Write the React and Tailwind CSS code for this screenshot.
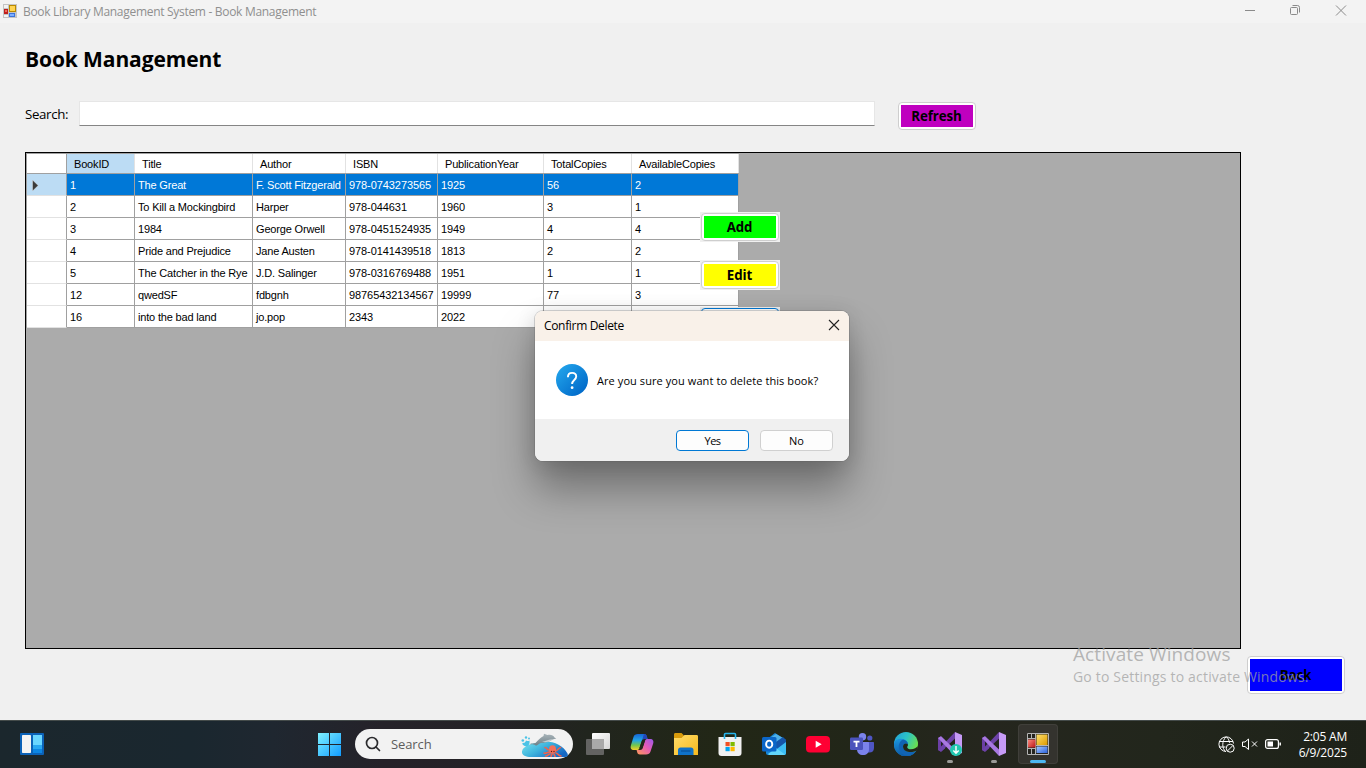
import React from "react";

const columns = ["BookID", "Title", "Author", "ISBN", "PublicationYear", "TotalCopies", "AvailableCopies"];
const books = [
  ["1", "The Great", "F. Scott Fitzgerald", "978-0743273565", "1925", "56", "2"],
  ["2", "To Kill a Mockingbird", "Harper", "978-044631", "1960", "3", "1"],
  ["3", "1984", "George Orwell", "978-0451524935", "1949", "4", "4"],
  ["4", "Pride and Prejudice", "Jane Austen", "978-0141439518", "1813", "2", "2"],
  ["5", "The Catcher in the Rye", "J.D. Salinger", "978-0316769488", "1951", "1", "1"],
  ["12", "qwedSF", "fdbgnh", "98765432134567", "19999", "77", "3"],
  ["16", "into the bad land", "jo.pop", "2343", "2022", "", ""],
];

const rowGrid = "grid grid-cols-[40px_68px_118px_93px_92px_106px_88px_107px]";

function FormsIcon({ className }) {
  return (
    <svg className={className} viewBox="0 0 14 14" shapeRendering="crispEdges">
      <rect width="14" height="14" fill="#c4c4c4" />
      <rect x="1" y="1" width="4" height="3" fill="#f3f3f3" />
      <rect x="1" y="11" width="4" height="2" fill="#f3f3f3" />
      <rect x="1" y="5" width="4" height="5" fill="#c0201c" />
      <rect x="2" y="6" width="2" height="2" fill="#f06a5c" />
      <rect x="6" y="1" width="7" height="7" fill="#b98900" />
      <rect x="7" y="2" width="5" height="5" fill="#ffd451" />
      <rect x="6" y="9" width="6" height="4" fill="#3a73dc" />
      <rect x="7" y="10" width="4" height="2" fill="#7fb0ff" />
    </svg>
  );
}

function TitleBar() {
  return (
    <div className="flex h-[23px] shrink-0 items-start bg-[#f3f3f3] pl-[3px]">
      <FormsIcon className="mt-1 h-[14px] w-[14px]" />
      <span className="ml-[6px] mt-[3px] text-[12px] leading-[18px] tracking-[-0.3px] text-[#8f8f8f]">
        Book Library Management System - Book Management
      </span>
      <div className="ml-auto mr-[19px] mt-[4px] flex gap-[34px] text-[#8a8a8a]">
        <svg className="h-3 w-3" viewBox="0 0 12 12" fill="none" stroke="currentColor"><path d="M2 6.500h10" /></svg>
        <svg className="h-3 w-3" viewBox="0 0 12 12" fill="none" stroke="currentColor">
          <rect x="1.500" y="3.500" width="7" height="7" rx="1" />
          <path d="M3.500 1.500h5a2 2 0 0 1 2 2v5" />
        </svg>
        <svg className="h-3 w-3" viewBox="0 0 12 12" fill="none" stroke="currentColor"><path d="M1 1.500l10 10M11 1.500l-10 10" /></svg>
      </div>
    </div>
  );
}

function DataGrid() {
  return (
    <div className="relative ml-[25px] mt-[21px] h-[497px] w-[1216px] border border-black bg-[#ababab]">
      <div className="w-[713px] border-l border-t border-[#a0a0a0] font-['Liberation_Sans',sans-serif] text-[11px] tracking-[-0.17px] text-black">
        <div className={`${rowGrid} h-[20px] border-b border-[#a0a0a0] bg-white leading-[18px]`}>
          <div className="border-r border-[#a0a0a0]" />
          {columns.map((c, i) => (
            <div key={c} className={`whitespace-nowrap border-r border-[#e2e2e2] pl-[7px] pt-px ${i === 0 ? "bg-[#bcdcf4]" : ""}`}>{c}</div>
          ))}
        </div>
        {books.map((b, r) => (
          <div key={b[0]} className={`${rowGrid} h-[22px] leading-[20px]`}>
            <div className={`flex h-[22px] items-center border-b border-r border-r-[#a0a0a0] border-b-[#e2e2e2] pl-[4px] ${r === 0 ? "bg-[#bcdcf4]" : "bg-white"}`}>
              {r === 0 && (
                <svg className="mt-[2px] h-[11px] w-[8px] shrink-0" viewBox="0 0 8 11"><path d="M1.500 0L7.200 5.500 1.500 11z" fill="#3b3b3b" stroke="#f5f5f5" strokeWidth=".4" /></svg>
              )}
            </div>
            {b.map((v, i) => (
              <div key={i} className={`h-[22px] whitespace-nowrap border-b border-r border-[#a0a0a0] pl-[3px] pt-px ${i > 2 ? "tracking-[-0.08px]" : ""} ${r === 0 ? "bg-[#0078d7] text-white" : "bg-white"}`}>{v}</div>
            ))}
          </div>
        ))}
      </div>
      <div className="absolute left-[674px] top-[59px] flex flex-col">
        <FormButton className="h-[30px] w-[80px]" fill="bg-[#00ff00]" label="Add" />
        <FormButton className="mt-[18px] h-[30px] w-[80px]" fill="bg-[#ffff00]" label="Edit" />
        <FormButton className="mt-[17px] h-[30px] w-[80px]" fill="bg-[#ff0000]" label="Delete" focused />
      </div>
    </div>
  );
}

function FormButton({ className, fill, label, focused }) {
  return (
    <div className={`bg-[#f0f0f0] p-px ${className}`}>
      <button className={`flex h-full w-full rounded-[4px] border bg-white p-[2px] ${focused ? "border-[#0078d4]" : "border-[#cecece]"}`}>
        <span className={`flex h-full w-full items-center justify-center pr-px pt-[2px] text-[13.300px] font-bold leading-none tracking-[-0.1px] text-black ${fill}`}>{label}</span>
      </button>
    </div>
  );
}

function ConfirmDialog() {
  return (
    <div className="absolute left-[535px] top-[311px] flex h-[150px] w-[314px] flex-col overflow-hidden rounded-[8px] bg-white text-black shadow-[0_0_0_1px_rgba(90,90,90,0.25),0_28px_40px_rgba(0,0,0,0.34),0_2px_20px_rgba(0,0,0,0.12)]">
      <div className="flex h-[30px] items-center justify-between bg-[#f9f1e9] pl-[9px] pr-[9px]">
        <span className="text-[12px] tracking-[-0.33px]">Confirm Delete</span>
        <svg className="mb-[2px] h-3 w-3" viewBox="0 0 12 12" stroke="#222" strokeWidth="1.1"><path d="M1 1l10 10M11 1L1 11" /></svg>
      </div>
      <div className="flex h-[78px] items-center pl-[21px]">
        <svg className="h-8 w-8" viewBox="0 0 32 32">
          <defs>
            <linearGradient id="q" x1="0" y1="0" x2="1" y2="1">
              <stop offset=".15" stopColor="#1f9fe8" /><stop offset=".9" stopColor="#0068c8" />
            </linearGradient>
          </defs>
          <circle cx="16" cy="16" r="16" fill="url(#q)" />
          <path d="M11.900 13.200c0-2.700 1.700-4.300 4.200-4.300 2.400 0 4.100 1.500 4.100 3.600 0 3.500-4.100 3.600-4.100 7.500" fill="none" stroke="#fff" strokeWidth="1.900" />
          <circle cx="16.100" cy="23.700" r="1.400" fill="#fff" />
        </svg>
        <span className="ml-[9px] mt-[2px] whitespace-nowrap text-[11px] tracking-[0.08px]">Are you sure you want to delete this book?</span>
      </div>
      <div className="flex flex-1 justify-end gap-[11px] bg-[#f0f0f0] pr-[16px] pt-[11px] text-[11px]">
        <button className="h-[21px] w-[73px] rounded-[4px] border border-[#0078d4] bg-[#fdfdfd] leading-[20px] tracking-[-0.6px]">Yes</button>
        <button className="h-[21px] w-[73px] rounded-[4px] border border-[#d0d0d0] bg-[#fdfdfd] leading-[20px]">No</button>
      </div>
    </div>
  );
}

function Dolphin() {
  return (
    <svg className="h-[24px] w-[48px]" viewBox="0 0 48 24">
      <defs>
        <linearGradient id="sea" x1="0" y1="0" x2="1" y2=".6"><stop stopColor="#7be6f0" /><stop offset=".5" stopColor="#3fb4dd" /><stop offset="1" stopColor="#1668c4" /></linearGradient>
        <linearGradient id="dol" x1="0" y1="0" x2="0" y2="1"><stop stopColor="#a9b5ba" /><stop offset="1" stopColor="#6f8088" /></linearGradient>
      </defs>
      <path d="M1 18.500C2 13 9 11 17 9.500 28 6 42 11 46.500 20.500c1 2 0 3.500-2.500 3.500H10c-5 0-9.500-1.500-9-5.500z" fill="url(#sea)" />
      <g fill="#4cc3e6">
        <circle cx="1.800" cy="7.500" r="1.300" /><circle cx="5" cy="4.500" r="1.200" /><circle cx="8" cy="5.500" r="1" />
        <path d="M1 10.500c2-1 3 0 4-3 1.500.5 2 1 3.500 0 .5 3-.5 5-2.500 6-2 0-4-1-5-3z" />
      </g>
      <path d="M9 11c1.500-.8 4-.3 5.500-1C17 7.500 19 4.500 22.500 3L23 .8 26.500 2c3-.8 6 .2 7 2.500l1.800 1-3.800 1c-3 2.200-7.500 3.500-11.500 3.500-2 .5-3 1.800-4.500 2.500-1 .3-1.200-.4-2-.8-1.500-.2-3.500 0-4.500-.7z" fill="url(#dol)" />
      <path d="M21 8.800c3.500-.3 6-2 9.500-2.500l.8.400c-3 2-6.300 3-10.300 2.100z" fill="#c6d0d4" />
      <g fill="none" stroke="#f0614c" strokeWidth="1.600" strokeLinecap="round">
        <path d="M29 19c-3 0-4 2-6 1M29 21c-2 0-2 2.500-4.500 2M31 21l-1 2.500M33 21l1 2.500M35 20c2 0 2 3 5 3M34 18c3 0 3-3 5.500-3.500M28 17c-2 0-2-2.500-4-2.500" />
      </g>
      <ellipse cx="31.500" cy="16.500" rx="3.500" ry="4.200" fill="#f4705a" />
      <circle cx="30.500" cy="18.500" r=".7" fill="#5c1d1a" /><circle cx="33" cy="18.500" r=".7" fill="#5c1d1a" />
    </svg>
  );
}

const TaskView = () => (
  <svg className="h-6 w-6" viewBox="0 0 24 24">
    <defs><linearGradient id="tv" x1="0" y1="0" x2="1" y2="1"><stop stopColor="#fff" /><stop offset="1" stopColor="#d5d5d5" /></linearGradient></defs>
    <rect x="6" y="1" width="18" height="16" rx="1" fill="url(#tv)" />
    <rect x="0" y="7" width="18" height="16" rx="1" fill="#6f6f6f" fillOpacity=".85" />
    <path d="M6 7h12v10H6z" fill="#a9a9a9" />
  </svg>
);
const Copilot = () => (
  <svg className="h-6 w-6" viewBox="0 0 24 24">
    <defs>
      <linearGradient id="cp1" x1="0" y1="0" x2="0" y2="1"><stop stopColor="#1664d5" /><stop offset=".4" stopColor="#22a5e5" /><stop offset=".7" stopColor="#72c64c" /><stop offset="1" stopColor="#f5cf27" /></linearGradient>
      <linearGradient id="cp2" x1="1" y1="0" x2="0" y2="1"><stop stopColor="#9a58ee" /><stop offset=".45" stopColor="#e55bb5" /><stop offset="1" stopColor="#ff9b55" /></linearGradient>
    </defs>
    <path d="M8 2h6c2 0 2.500 1 3 3l.5 2h-3c-2 0-2.500 1-3 3l-2 6c-.5 1.500-1 2-3 2H4c-3 0-4-1.500-3-5L3.500 5C4.300 2.800 5.500 2 8 2z" fill="url(#cp1)" />
    <path d="M16 22.500h-6c-2 0-2.600-1-3-3L6.600 18H10c2 0 2.500-1.300 3-3l2-6c.5-1.500 1-2 3-2h2c3 0 4 2 3 5l-2.500 7.500c-.8 2.200-2 3-4.500 3z" fill="url(#cp2)" />
    <path d="M14 2c2 0 2.500 1 3 3l.5 2h-3c-1.200 0-2 .5-2.500 1.500z" fill="#2346b8" />
    <path d="M12.200 7.800h2.900l-2.700 8.400H9.300z" fill="#232818" />
  </svg>
);
const Explorer = () => (
  <svg className="h-6 w-6" viewBox="0 0 24 24">
    <defs><linearGradient id="ex" x1="0" y1="0" x2="1" y2="1"><stop stopColor="#ffdd6b" /><stop offset="1" stopColor="#f6b91c" /></linearGradient></defs>
    <path d="M0 2.500C0 1.500.5 1 1.500 1h6L10 3.500V7H0z" fill="#d89b0c" />
    <path d="M0 6h7.500l3-3h12c1 0 1.500.5 1.500 1.500V23H0z" fill="url(#ex)" />
    <path d="M4 23v-5c0-1.500 1-2.500 2.500-2.500h10.500c1.500 0 2.500 1 2.500 2.500v5z" fill="#0f72c8" />
    <path d="M7 19h9.500" stroke="#0a55a0" strokeWidth="1.400" />
  </svg>
);
const Store = () => (
  <svg className="h-6 w-6" viewBox="0 0 24 24">
    <path d="M.5 5h23v16c0 2-1 3-3 3h-17c-2 0-3-1-3-3z" fill="#f1f1f1" />
    <path d="M6.500 7V2.500c0-.7.3-1 1-1h9c.7 0 1 .3 1 1V7" fill="none" stroke="#27b6ef" strokeWidth="1.600" />
    <rect x="7.500" y="10" width="4.200" height="4.200" fill="#f25022" /><rect x="12.500" y="10" width="4.200" height="4.200" fill="#7fba00" />
    <rect x="7.500" y="15" width="4.200" height="4.200" fill="#00a4ef" /><rect x="12.500" y="15" width="4.200" height="4.200" fill="#ffb900" />
  </svg>
);
const Outlook = () => (
  <svg className="h-6 w-6" viewBox="0 0 24 24">
    <path d="M4 8L13 1l11 7v13c0 1.300-.7 2-2 2H6c-1.300 0-2-.7-2-2z" fill="#1685d7" />
    <path d="M8 6l6-4 7 4-8 7-5-2z" fill="#4fb0e8" /><path d="M11 12l10-7 3 3v3l-10 7z" fill="#1556ab" />
    <path d="M24 10v11c0 1.300-.7 2-2 2H7z" fill="#3bbdf4" /><path d="M6 22l8-6 9 6.500c-.3.300-.6.500-1 .5H7z" fill="#62d5fa" />
    <rect x="0" y="5" width="14.500" height="14.500" rx="1.500" fill="#0b66c8" />
    <ellipse cx="7.200" cy="12.200" rx="3.100" ry="3.600" fill="none" stroke="#fff" strokeWidth="1.900" />
  </svg>
);
const YouTube = () => (
  <svg className="h-6 w-6" viewBox="0 0 24 24"><rect y="4" width="24" height="16.500" rx="4" fill="#ff0033" /><path d="M9.700 8.800v7l6-3.500z" fill="#fff" /></svg>
);
const Teams = () => (
  <svg className="h-6 w-6" viewBox="0 0 24 24">
    <circle cx="19.800" cy="6" r="2.600" fill="#4f56c4" /><path d="M16 10h7c.6 0 1 .4 1 1v5c0 3-2 4.500-4.500 4.500H16z" fill="#4f56c4" />
    <circle cx="12.500" cy="4.700" r="3.700" fill="#7b83eb" /><path d="M7 10h11c.6 0 1 .4 1 1v6c0 4-2.500 6-6 6s-6-2-6-6z" fill="#7b83eb" />
    <rect x="0" y="5.500" width="13" height="12.500" rx="1.200" fill="#4b53bc" />
    <path d="M3.500 8.800h6v1.600H7.400V15H5.600v-4.600H3.500z" fill="#fff" />
  </svg>
);
const Edge = () => (
  <svg className="h-6 w-6" viewBox="0 0 24 24">
    <defs>
      <linearGradient id="e1" x1="0" y1="0" x2="1" y2=".5"><stop stopColor="#229fdb" /><stop offset=".5" stopColor="#2bc3c9" /><stop offset="1" stopColor="#6de04b" /></linearGradient>
      <linearGradient id="e2" x1="0" y1="0" x2="0" y2="1"><stop stopColor="#1b95df" /><stop offset="1" stopColor="#0c59a4" /></linearGradient>
    </defs>
    <circle cx="12" cy="12" r="12" fill="url(#e1)" />
    <path d="M0 12C.5 7.500 5 6 9 7c3 .8 5 3 5 5.500-1.500-2-5-1-5 2 0 4 5 6.500 10 5.500 1.500-.3 2.500-.8 3.300-1.200A12 12 0 0 1 0 12z" fill="url(#e2)" />
    <path d="M9 7.500c-5 2.500-5.500 9-2 13 1.800 2 4 3.300 7 3.300A12 12 0 0 0 22.300 18.800C17 21.500 9 20 9 14.500c0-3 3.500-4 5-2 0-2.500-2-4.300-5-5z" fill="#1164b4" />
    <path d="M14 12.500c.3 1-.8 1.700-.8 2.800 0 2 4.500 2.900 8 .9 1.500-.8 2.300-1.700 2.500-2.200.1 2-.4 3.300-1.400 4.800C17 21.500 9 20 9 14.500c0-3 3.500-4 5-2z" fill="#232619" />
  </svg>
);
const VS = ({ installer }) => (
  <svg className="h-6 w-6" viewBox="0 0 24 24">
    <path d="M0 6l3-1.700L7 8v8.500l-4 3.200L0 18z" fill="#6b3fa5" />
    <path d="M3 19.700L0 18 17 0v6.500z" fill="#6d42a8" />
    <path d="M0 6l3-1.700L17 17.500V24z" fill="#a878e0" />
    <path d="M3 9.500L5.300 12 3 14.500z" fill="#20221e" />
    <path d="M17 0l7 3v18l-7 3z" fill="#c79bf7" />
    {installer && <g><circle cx="18" cy="18" r="6" fill="#22c7b0" /><path d="M18 14v7M15.300 18.500L18 21.200l2.700-2.700" stroke="#fff" strokeWidth="1.400" fill="none" /></g>}
  </svg>
);
const FormsApp = () => (
  <svg className="h-[22px] w-[22px]" viewBox="0 0 22 22">
    <defs>
      <linearGradient id="fy" x1="0" y1="0" x2="1" y2="1"><stop stopColor="#ffe06a" /><stop offset="1" stopColor="#dc9a00" /></linearGradient>
      <linearGradient id="fr" x1="0" y1="0" x2="1" y2="1"><stop stopColor="#ff8a80" /><stop offset="1" stopColor="#b81414" /></linearGradient>
      <linearGradient id="fb" x1="0" y1="0" x2="1" y2="1"><stop stopColor="#a5c8ff" /><stop offset="1" stopColor="#2b62dc" /></linearGradient>
    </defs>
    <rect width="22" height="22" fill="#25241f" />
    <path d="M.5.500h21v21H.5zM4.500 0v5M4.500 15v7M8.500 0v22M0 5.500h9M0 15.500h9M9 12.500h13" fill="none" stroke="#b4b4b4" />
    <rect x="9.500" y="1.500" width="11" height="10.500" fill="url(#fy)" /><rect x="1" y="6.500" width="7.500" height="8" fill="url(#fr)" /><rect x="9.500" y="13.500" width="11" height="6.500" fill="url(#fb)" />
  </svg>
);

function TaskItem({ children, state }) {
  return (
    <div className="flex h-12 w-11 flex-col items-center">
      <div className={`mt-1 flex h-10 w-10 flex-col items-center rounded-[4px] ${state === "active" ? "bg-[#34332e] ring-1 ring-[#403f3a] ring-inset" : ""}`}>
        <div className="mt-2 flex h-6 items-center">{children}</div>
        {state && <div className={`mt-[4px] h-[3px] rounded-full ${state === "active" ? "w-4 bg-[#4cb8f2]" : "w-[6px] bg-[#9b9b98]"}`} />}
      </div>
    </div>
  );
}

function Taskbar() {
  return (
    <div className="flex h-12 shrink-0 bg-[linear-gradient(90deg,#1b272d_0%,#1a272f_14%,#1f2730_20%,#252229_28%,#242226_37%,#21251e_43%,#222716_53%,#222619_63%,#25261e_72%,#22261c_85%,#1e2219_100%)] shadow-[inset_0_1px_0_#444b4a]">
      <svg className="ml-5 mt-[13px] h-[22px] w-6" viewBox="0 0 24 22">
        <rect width="24" height="22" rx="1" fill="#0b62b8" /><rect x="2" y="2" width="9" height="18" rx=".7" fill="#f4f4f4" />
        <rect x="13" y="2" width="9" height="10" fill="#69d6ff" /><rect x="13" y="12" width="9" height="4" fill="#28a8f2" /><rect x="13" y="16" width="9" height="4" fill="#0c86e4" />
      </svg>
      <svg className="ml-[274px] mt-[13px] h-[23px] w-[23px]" viewBox="0 0 23 23">
        <defs><linearGradient id="win" gradientUnits="userSpaceOnUse" x1="0" y1="0" x2="23" y2="23"><stop stopColor="#7ff1ff" /><stop offset="1" stopColor="#119bff" /></linearGradient></defs>
        <path d="M0 0h11v11H0zM12 0h11v11H12zM0 12h11v11H0zM12 12h11v11H12z" fill="url(#win)" />
      </svg>
      <div className="ml-[14px] mt-[9px] flex h-[30px] w-[218px] items-center rounded-full bg-[#f2f2f2] pl-[10px] pr-[4px]">
        <svg className="h-4 w-4" viewBox="0 0 16 16" fill="none" stroke="#2b2b2e" strokeWidth="1.700" strokeLinecap="round"><circle cx="7" cy="7" r="5.500" /><path d="M11 11l3.500 3.500" /></svg>
        <span className="ml-[10px] mt-px text-[13px] tracking-[-0.1px] text-[#5d5d5d]">Search</span>
        <div className="ml-auto mt-px"><Dolphin /></div>
      </div>
      <div className="ml-[3px] flex">
        <TaskItem><TaskView /></TaskItem>
        <TaskItem><Copilot /></TaskItem>
        <TaskItem><Explorer /></TaskItem>
        <TaskItem><Store /></TaskItem>
        <TaskItem><Outlook /></TaskItem>
        <TaskItem><YouTube /></TaskItem>
        <TaskItem><Teams /></TaskItem>
        <TaskItem><Edge /></TaskItem>
        <TaskItem state="open"><VS installer /></TaskItem>
        <TaskItem state="open"><VS /></TaskItem>
        <TaskItem state="active"><FormsApp /></TaskItem>
      </div>
      <div className="ml-auto flex items-center gap-[7px] text-white">
        <svg className="h-[17px] w-[17px]" viewBox="0 0 17 17" fill="none" stroke="currentColor">
          <path d="M8 15.500A7.300 7.300 0 1 1 15.500 7.500M1 5.500h14M1 11h6.500M8 .8C3.800 5 3.800 12 7.500 15.500M8.500.8c2 2 2.800 4 3 6" />
          <circle cx="12.200" cy="12.200" r="4" /><path d="M9.400 15l5.600-5.600" />
        </svg>
        <svg className="h-4 w-4" viewBox="0 0 16 16" fill="none" stroke="currentColor"><path d="M.500 6v4.500h2.500l3.500 3V3L3 6zM10 5.500l5 5M15 5.500l-5 5" /></svg>
        <svg className="h-[10px] w-4" viewBox="0 0 16 10" fill="none" stroke="currentColor"><rect x=".6" y=".6" width="12.800" height="8.800" rx="2" strokeWidth="1.200" /><rect x="2.500" y="2.500" width="5.500" height="5" fill="currentColor" stroke="none" /><path d="M15.200 3.500v3" strokeWidth="1.500" /></svg>
      </div>
      <div className="ml-[14px] mr-[19px] mt-[9px] w-[52px] whitespace-nowrap text-[12px] leading-[16px] tracking-[-0.2px] text-white">
        <div className="flex justify-end">2:05 AM</div>
        <div className="flex justify-end">6/9/2025</div>
      </div>
    </div>
  );
}

export default function App() {
  return (
    <div className="relative flex h-[768px] w-[1366px] flex-col overflow-hidden bg-[#f0f0f0] font-['Open_Sans','Noto_Sans',sans-serif] text-black">
      <TitleBar />
      <main className="flex flex-1 flex-col">
        <h1 className="ml-[25px] mt-[21px] h-[30px] whitespace-nowrap text-[21px] font-bold leading-[30px] tracking-[-0.1px]">Book Management</h1>
        <div className="ml-[25px] mt-[27px] flex h-[30px] items-start">
          <label className="w-[54px] pt-[3px] text-[13.300px] leading-[20px] tracking-[-0.35px]">Search:</label>
          <input className="h-[25px] w-[796px] border border-[#e6e6e6] border-b-[#858585] bg-white" />
          <FormButton className="ml-[22px] h-[30px] w-[80px]" fill="bg-[#bf00bf]" label="Refresh" />
        </div>
        <DataGrid />
        <FormButton className="ml-[1246px] mt-[6px] h-[40px] w-[100px]" fill="bg-[#0000ff]" label="Back" />
      </main>
      <Taskbar />
      <div className="absolute left-[1073px] top-[641px] whitespace-nowrap text-[#a0a0a0]/75">
        <div className="text-[19px] leading-[27px] tracking-[0.1px]">Activate Windows</div>
        <div className="text-[14px] leading-[18px] tracking-[0.18px]">Go to Settings to activate Windows.</div>
      </div>
      <ConfirmDialog />
    </div>
  );
}
